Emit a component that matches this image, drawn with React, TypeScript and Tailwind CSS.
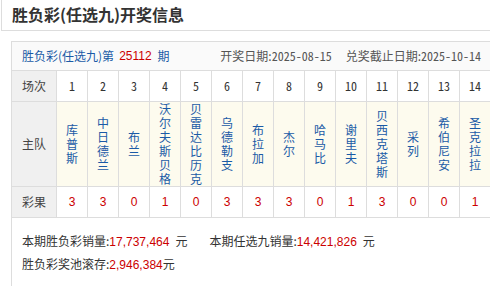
import React from "react";

const teams = [
  "库普斯",
  "中日德兰",
  "布兰",
  "沃尔夫斯贝格",
  "贝雷达比历克",
  "乌德勒支",
  "布拉加",
  "杰尔",
  "哈马比",
  "谢里夫",
  "贝西克塔斯",
  "采列",
  "希伯尼安",
  "圣克拉拉",
];
const results = ["3", "3", "0", "1", "0", "3", "3", "3", "0", "1", "3", "0", "0", "1"];

const CJK = "font-['Noto_Sans_CJK_SC','Noto_Sans',sans-serif]";
const MONO = "font-['Noto_Sans_Mono_CJK_SC','Liberation_Mono',monospace]";
const ARIAL = "font-['Liberation_Sans','Noto_Sans_CJK_SC',sans-serif]";

export default function App() {
  return (
    <div className={`w-[490px] h-[286px] overflow-hidden bg-white pl-[1px] ${CJK}`}>
      <div className="w-[600px] h-[31px] border-l border-b border-[#dddddd] flex items-center pl-[10px] pb-[2px]">
        <span className="text-[16px] font-bold text-[#333333] leading-none">胜负彩(任选九)开奖信息</span>
      </div>
      <div className="ml-[10px] mt-[10px] w-[600px] border-l border-t border-[#dddddd] h-[300px]">
        <div className="h-[29px] bg-[#fafafa] border-b border-[#dddddd] flex items-center pl-[10px] text-[12px] w-[479px]">
          <span className="text-[#1a5aa6]">胜负彩(任选九)第</span>
          <span className={`text-[#cc0000] ml-[5px] ${ARIAL}`}>25112</span>
          <span className="text-[#1a5aa6] ml-[6px]">期</span>
          <span className="ml-auto text-[#555555] pr-[10px] flex gap-[14px]">
            <span>
              开奖日期:<span className={MONO}>2025-08-15</span>
            </span>
            <span>
              兑奖截止日期:<span className={MONO}>2025-10-14</span>
            </span>
          </span>
        </div>
        <div className="flex h-[31px]">
          <div className="w-[45px] shrink-0 bg-[#f0f0f0] border-r border-b border-[#dddddd] flex items-center justify-center text-[12px] text-[#444444]">
            场次
          </div>
          {teams.map((_, i) => (
            <div
              key={i}
              className={`w-[31px] shrink-0 border-r border-b border-[#dddddd] flex items-center justify-center text-[12px] text-[#333333] ${MONO}`}
            >
              {i + 1}
            </div>
          ))}
        </div>
        <div className="flex h-[85px]">
          <div className="w-[45px] shrink-0 bg-[#f0f0f0] border-r border-b border-[#dddddd] flex items-center justify-center text-[12px] text-[#444444]">
            主队
          </div>
          {teams.map((t, i) => (
            <div
              key={i}
              className="w-[31px] shrink-0 bg-[#fdfbee] border-r border-b border-[#dddddd] flex items-center justify-center"
            >
              <div className="w-[12px] text-[12px] leading-[14px] break-all text-[#1a5aa6] text-center">{t}</div>
            </div>
          ))}
        </div>
        <div className="flex h-[31px]">
          <div className="w-[45px] shrink-0 bg-[#f0f0f0] border-r border-b border-[#dddddd] flex items-center justify-center text-[12px] text-[#444444]">
            彩果
          </div>
          {results.map((r, i) => (
            <div
              key={i}
              className={`w-[31px] shrink-0 border-r border-b border-[#dddddd] flex items-center justify-center text-[12px] text-[#cc0000] ${ARIAL}`}
            >
              {r}
            </div>
          ))}
        </div>
        <div className="pl-[10px] pt-[12px] text-[12px] leading-[22px] text-[#333333]">
          <div className="flex">
            <span>
              本期胜负彩销量:<span className={`text-[#cc0000] ${ARIAL}`}>17,737,464</span>
              <span className="ml-[6px]">元</span>
            </span>
            <span className="ml-[22px]">
              本期任选九销量:<span className={`text-[#cc0000] ${ARIAL}`}>14,421,826</span>
              <span className="ml-[6px]">元</span>
            </span>
          </div>
          <div>
            胜负彩奖池滚存:<span className={`text-[#cc0000] ${ARIAL}`}>2,946,384</span>元
          </div>
        </div>
      </div>
    </div>
  );
}
